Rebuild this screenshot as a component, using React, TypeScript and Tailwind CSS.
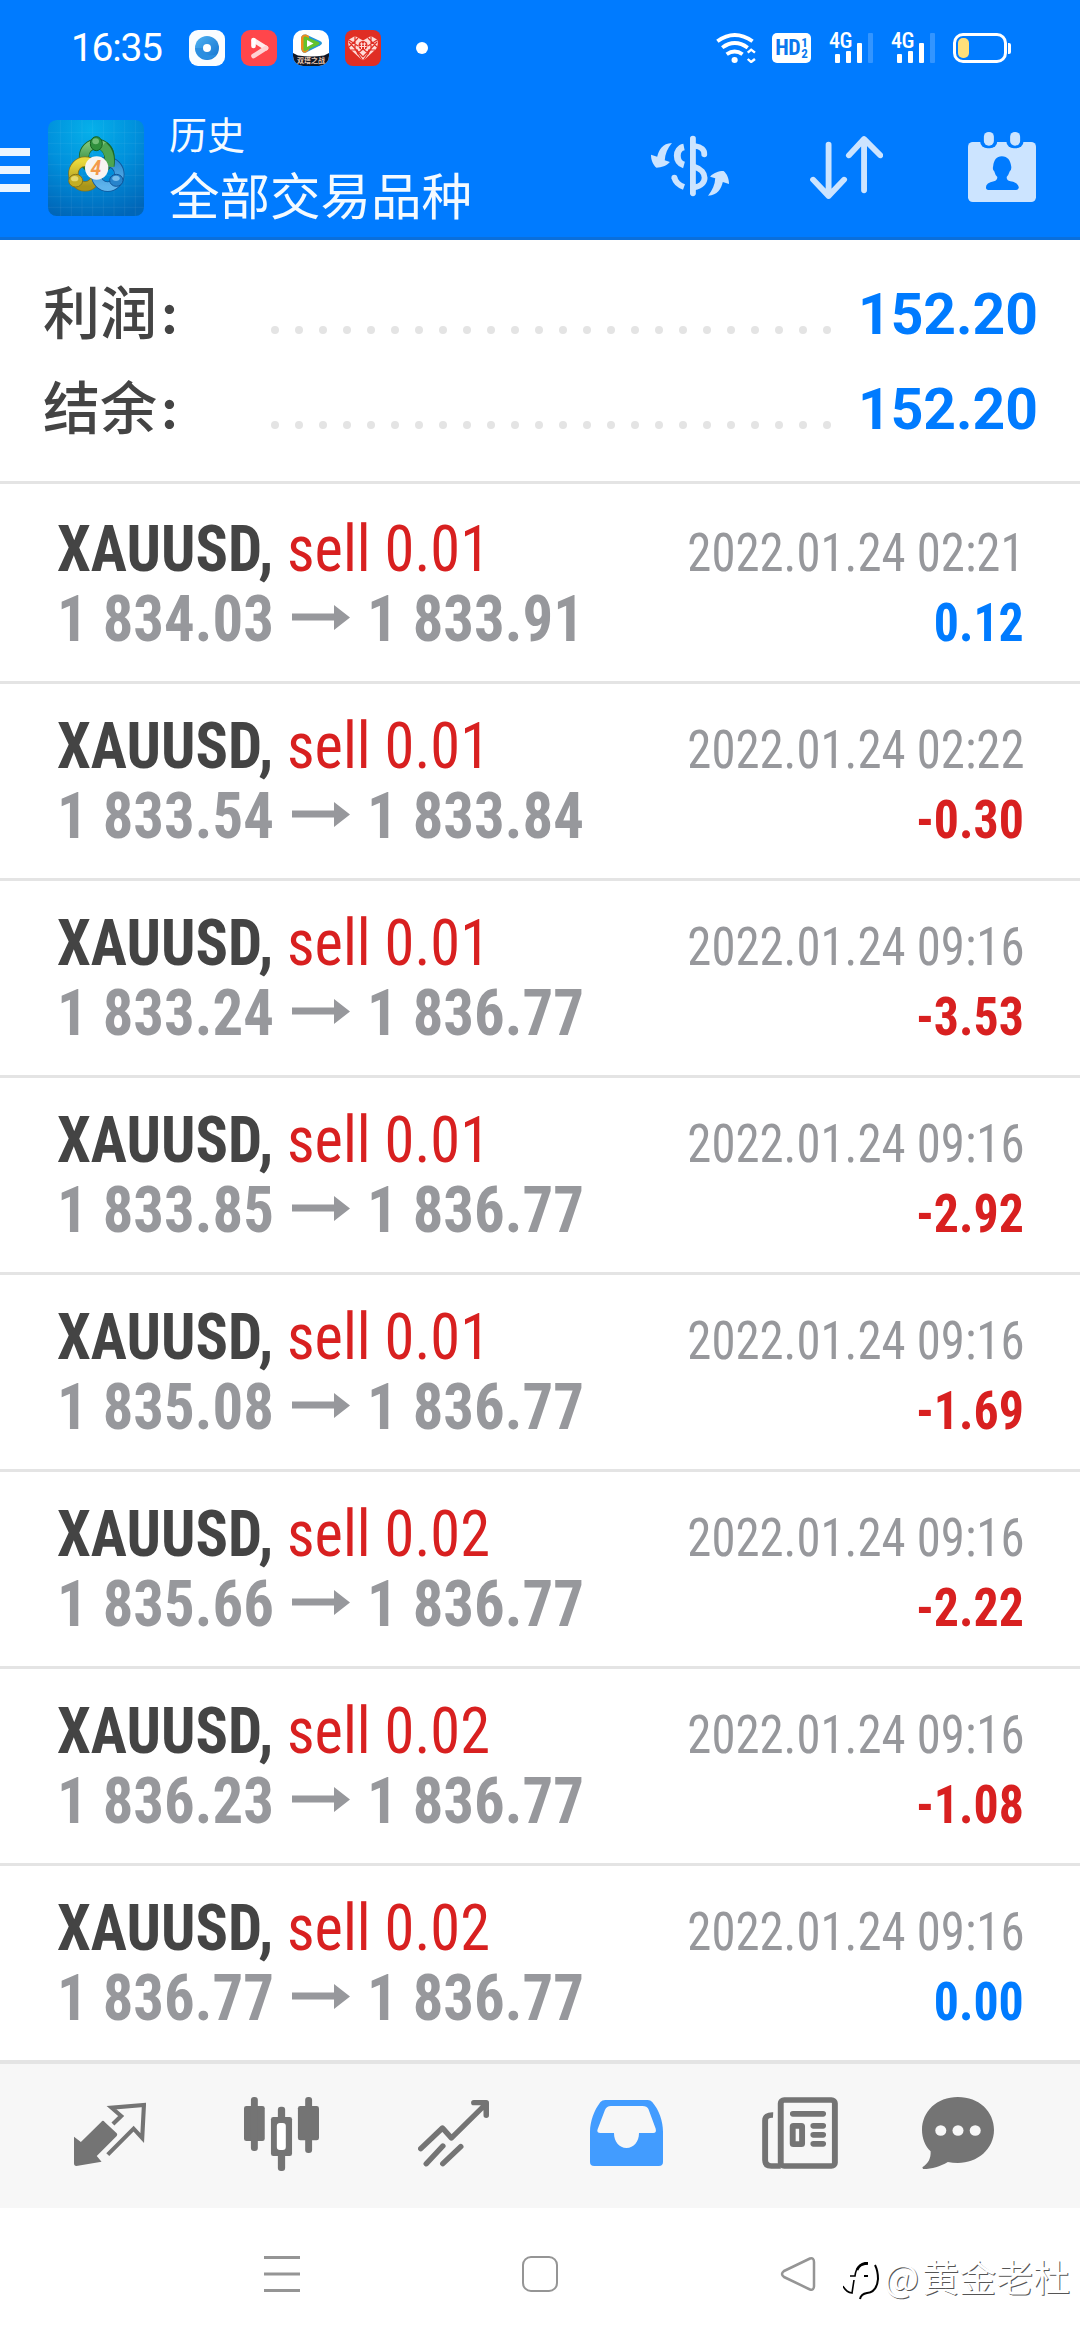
import React from "react";

type Deal = { volume: string; open: string; close: string; time: string; profit: string };

const deals: Deal[] = [
  { volume: "0.01", open: "1 834.03", close: "1 833.91", time: "2022.01.24 02:21", profit: "0.12" },
  { volume: "0.01", open: "1 833.54", close: "1 833.84", time: "2022.01.24 02:22", profit: "-0.30" },
  { volume: "0.01", open: "1 833.24", close: "1 836.77", time: "2022.01.24 09:16", profit: "-3.53" },
  { volume: "0.01", open: "1 833.85", close: "1 836.77", time: "2022.01.24 09:16", profit: "-2.92" },
  { volume: "0.01", open: "1 835.08", close: "1 836.77", time: "2022.01.24 09:16", profit: "-1.69" },
  { volume: "0.02", open: "1 835.66", close: "1 836.77", time: "2022.01.24 09:16", profit: "-2.22" },
  { volume: "0.02", open: "1 836.23", close: "1 836.77", time: "2022.01.24 09:16", profit: "-1.08" },
  { volume: "0.02", open: "1 836.77", close: "1 836.77", time: "2022.01.24 09:16", profit: "0.00" },
];

function Signal() {
  return (
    <div className="relative flex h-[30px] w-11 items-end justify-end gap-[6px]">
      <span className="absolute -top-[3px] left-0 font-['Roboto_Condensed',sans-serif] text-[22px] leading-[22px] font-medium tracking-[-0.5px] text-white">
        4G
      </span>
      <i className="h-[9px] w-[5px] rounded-[1px] bg-white" />
      <i className="h-[12px] w-[5px] rounded-[1px] bg-white" />
      <i className="h-5 w-[5px] rounded-[1px] bg-white" />
      <i className="h-[30px] w-[5px] rounded-[1px] bg-white/20" />
    </div>
  );
}

function StatusBar() {
  return (
    <div className="flex h-24 items-center pr-[69px] pl-[71px]">
      <span className="w-[118px] font-[Roboto,sans-serif] text-[39px] leading-none tracking-[-1.300px] text-white">16:35</span>
      <div className="flex gap-4">
        <svg className="size-9" viewBox="0 0 36 36">
          <defs>
            <linearGradient id="disc" x1="0" y1="0" x2="1" y2="1">
              <stop offset="0" stopColor="#4eb2f2" />
              <stop offset="1" stopColor="#1272cf" />
            </linearGradient>
          </defs>
          <rect width="36" height="36" rx="9" fill="#fafdff" />
          <circle cx="18" cy="18" r="12" fill="url(#disc)" />
          <path d="M6 18A12 12 0 0 0 28 24C22 27 15 25 14 18Z" fill="#2a8ee0" />
          <circle cx="18" cy="18" r="4" fill="#fff" />
        </svg>
        <svg className="size-9" viewBox="0 0 36 36">
          <rect width="36" height="36" rx="9" fill="#ff464b" />
          <path d="M12.500 10V16" stroke="#fff" strokeWidth="4.600" strokeLinecap="round" />
          <path d="M13 10.500L25 18" stroke="#fff" strokeWidth="4.600" strokeLinecap="round" opacity="0.9" />
          <path d="M25 18L12.500 26" stroke="#ffd3d4" strokeWidth="4.600" strokeLinecap="round" />
        </svg>
        <div className="relative size-9 overflow-hidden rounded-[10px] bg-white">
          <svg className="size-9" viewBox="0 0 36 36">
            <path d="M13 4.500Q8 4 8 9V18Q9 24 13 22.500L27 15.500Q31 13 27 11Z" fill="#2496d8" />
            <path d="M13 4.500Q8 4 8 9V18Q9 24 13 22.500L16 20V6Z" fill="#f08c1e" />
            <path d="M12 8V19.500L25 13.500Z" fill="#62c22d" stroke="#62c22d" strokeWidth="3" strokeLinejoin="round" />
            <path d="M14 10V17L20.500 13.500Z" fill="#fff" />
            <path d="M0 23L5 25.500Q18 27.500 31 25.500L36 23V36H0Z" fill="#101827" />
          </svg>
          <span className="absolute top-[26px] left-[4px] font-['Noto_Sans_CJK_SC',sans-serif] text-[7px] leading-[9px] font-bold whitespace-nowrap text-[#e6c7b4]">
            双塔之战
          </span>
        </div>
        <svg className="size-9" viewBox="0 0 36 36">
          <rect width="36" height="36" rx="8" fill="#e02e24" />
          <path d="M18 31L5 19Q2 14 4 9.500L10 6L18 10.500L26 6L32 9.500Q34 14 31 19Z" fill="#ffdcd8" />
          <path
            d="M4 12L18 27M32 12L18 27M10 6V19L18 31M26 6V19L18 31M4 17L13 8M32 17L23 8M6 20H13M23 20H30M12 24L18 19L24 24M4 10L13 16M32 10L23 16"
            stroke="#e02e24"
            strokeWidth="1.200"
            fill="none"
          />
          <circle cx="18" cy="15.500" r="4.600" fill="#e02e24" />
          <path d="M15 14H21M14.500 16.500H21.500M16.500 12.500V19M19.500 12.500V19" stroke="#ffdcd8" strokeWidth="1" />
        </svg>
      </div>
      <i className="ml-[35px] size-3 rounded-full bg-white" />
      <div className="ml-auto flex items-center">
        <svg className="h-[30px] w-10" viewBox="512 99 116 90" preserveAspectRatio="none">
          <g fill="none" stroke="#fff" strokeWidth="11">
            <path d="M516 124Q566 86 618 124" />
            <path d="M530 143Q566 115 604 143" />
            <path d="M543 163Q566 146 589 163" />
            <path d="M604 158L614 149L625 158M604 177L614 186L625 177" strokeWidth="7" />
          </g>
          <circle cx="566" cy="180" r="9" fill="#fff" />
        </svg>
        <div className="ml-4 flex h-[30px] w-[39px] items-center justify-center gap-px rounded-[5px] bg-white font-['Roboto_Condensed',sans-serif] text-[#0a78ee]">
          <span className="text-[22px] leading-[30px] font-bold tracking-[-0.5px]">HD</span>
          <span className="flex flex-col text-[13px] leading-[11px] font-bold">
            <span>1</span>
            <span>2</span>
          </span>
        </div>
        <div className="ml-[18px]">
          <Signal />
        </div>
        <div className="ml-[18px]">
          <Signal />
        </div>
        <div className="ml-[18px] h-[30px] w-[54px] rounded-[10px] border-[3px] border-white p-[2px]">
          <div className="h-5 w-[11px] rounded-[5px] bg-[#ffdf7a]" />
        </div>
        <i className="ml-px h-[11px] w-[3px] rounded-r-[2px] bg-white" />
      </div>
    </div>
  );
}

function AppLogo() {
  return (
    <svg className="mt-6 ml-[18px] size-24 shrink-0" viewBox="12 12 288 288">
      <defs>
        <radialGradient id="tile" cx="0.45" cy="0.1" r="0.95">
          <stop offset="0" stopColor="#06b0ea" />
          <stop offset="0.5" stopColor="#0090dc" />
          <stop offset="1" stopColor="#0066b8" />
        </radialGradient>
        <linearGradient id="green" x1="0" y1="0" x2="0" y2="1">
          <stop offset="0" stopColor="#7cc47a" />
          <stop offset="1" stopColor="#1f7a2c" />
        </linearGradient>
        <linearGradient id="yellow" x1="0" y1="0" x2="0" y2="1">
          <stop offset="0" stopColor="#e9d83c" />
          <stop offset="1" stopColor="#a8941a" />
        </linearGradient>
        <linearGradient id="blue" x1="0" y1="0" x2="0" y2="1">
          <stop offset="0" stopColor="#2f8fd4" />
          <stop offset="1" stopColor="#5fb4ec" />
        </linearGradient>
      </defs>
      <rect x="12" y="12" width="288" height="288" rx="26" fill="url(#tile)" />
      <path
        d="M50 12V300M82 12V300M114 12V300M146 12V300M178 12V300M210 12V300M242 12V300M274 12V300M12 50H300M12 82H300M12 114H300M12 146H300M12 178H300M12 210H300M12 242H300M12 274H300"
        stroke="#fff"
        strokeOpacity="0.09"
        strokeWidth="2"
      />
      <g fill="none">
        <ellipse cx="158" cy="122" rx="38" ry="38" stroke="#1d6a28" strokeWidth="31" />
        <ellipse cx="158" cy="122" rx="38" ry="38" stroke="url(#green)" strokeWidth="26" />
        <ellipse cx="123" cy="174" rx="35" ry="37" stroke="#857318" strokeWidth="31" />
        <ellipse cx="123" cy="174" rx="35" ry="37" stroke="url(#yellow)" strokeWidth="26" />
        <ellipse cx="191" cy="175" rx="35" ry="37" stroke="#11569a" strokeWidth="31" />
        <ellipse cx="191" cy="175" rx="35" ry="37" stroke="url(#blue)" strokeWidth="26" />
        <path d="M180 91Q202 108 196 150" stroke="#1d6a28" strokeWidth="31" />
        <path d="M176 89Q202 108 196 152" stroke="#4da552" strokeWidth="26" />
      </g>
      <ellipse cx="157" cy="83" rx="18" ry="21" fill="#2f8f3c" stroke="#15601f" strokeWidth="3" />
      <ellipse cx="155" cy="76" rx="10" ry="9" fill="#8fd08e" opacity="0.7" />
      <ellipse cx="95" cy="194" rx="21" ry="19" fill="#c4ae24" stroke="#857318" strokeWidth="3" />
      <ellipse cx="92" cy="188" rx="11" ry="8" fill="#f3e98a" opacity="0.7" />
      <ellipse cx="217" cy="193" rx="20" ry="18" fill="#2784cc" stroke="#11569a" strokeWidth="3" />
      <ellipse cx="216" cy="187" rx="11" ry="8" fill="#9ad4f8" opacity="0.7" />
      <circle cx="158" cy="156" r="35" fill="#f7f4f2" />
      <text x="156" y="176" textAnchor="middle" fontFamily="Roboto, sans-serif" fontWeight="700" fontStyle="italic" fontSize="58" fill="#f39a4a">
        4
      </text>
    </svg>
  );
}

function Header() {
  return (
    <header className="h-60 shrink-0 border-b-[3px] border-[#0a6fdc] bg-[#007bff]">
      <StatusBar />
      <div className="flex items-start pr-11">
        <div className="mt-[52px] flex w-[30px] flex-col gap-[10px]">
          <i className="h-2 bg-[#eaf5ff]" />
          <i className="h-2 bg-[#eaf5ff]" />
          <i className="h-2 bg-[#eaf5ff]" />
        </div>
        <AppLogo />
        <div className="mt-3 ml-[25px] font-['Noto_Sans_CJK_SC',sans-serif] text-[#f4faff]">
          <div className="text-[38px] leading-[50px]">历史</div>
          <div className="text-[50.500px] leading-[70px]">全部交易品种</div>
        </div>
        <svg className="mt-[35px] ml-auto h-[72px] w-[78px]" viewBox="322 393 227 216" preserveAspectRatio="none">
          <g fill="none" stroke="#cce4ff" strokeWidth="17">
            <path d="M444 416V580" strokeLinecap="round" />
            <path d="M418 441C392 446 392 488 418 495" strokeWidth="20" />
            <path d="M450 438C468 440 478 450 477 463" strokeLinecap="round" />
            <path d="M448 500C488 512 488 556 448 562" />
            <path d="M390 533C393 546 404 556 418 561" />
            <path d="M390 533V533.100" strokeLinecap="round" />
          </g>
          <path
            id="swap"
            d="M383 429C355 430 345 450 340 470L322 464C322 480 328 495 338 503C352 503 368 497 377 486L362 481C363 462 370 445 383 429Z"
            fill="#cce4ff"
          />
          <use href="#swap" transform="rotate(180 435.500 508)" />
        </svg>
        <svg className="mt-[35px] ml-[81px] h-[72px] w-[73px]" viewBox="783 393 212 216" preserveAspectRatio="none">
          <path
            d="M837 434V588M792 539L837 588L882 539M940 571V417M896 466L940 417L987 466"
            fill="none"
            stroke="#cce4ff"
            strokeWidth="17"
            strokeLinecap="round"
            strokeLinejoin="round"
          />
        </svg>
        <svg className="mt-[35px] ml-[85px] h-[72px] w-[68px]" viewBox="1243 393 197 216" preserveAspectRatio="none">
          <rect x="1243" y="426" width="197" height="180" rx="14" fill="#cce4ff" />
          <rect x="1278" y="380" width="50" height="65" rx="22" fill="#007bff" />
          <rect x="1354" y="380" width="50" height="65" rx="22" fill="#007bff" />
          <rect x="1289" y="396" width="29" height="41" rx="14" fill="#cce4ff" />
          <rect x="1365" y="396" width="29" height="41" rx="14" fill="#cce4ff" />
          <path
            d="M1341 469C1358 469 1366 482 1368 498Q1370 510 1364 514Q1360 526 1355 531Q1355 542 1366 544Q1388 548 1390 561V564Q1388 570 1382 570H1302Q1295 570 1295 562Q1295 549 1318 544Q1328 541 1328 531Q1322 526 1319 514Q1313 510 1316 498C1318 480 1326 469 1341 469Z"
            fill="#007bff"
          />
        </svg>
      </div>
    </header>
  );
}

function SummaryRow({ label, value }: { label: string; value: string }) {
  return (
    <div className="flex h-[95px] items-baseline pr-[42px] pl-[43px] leading-[95px]">
      <span className="w-[228px] font-['Noto_Sans_CJK_SC',sans-serif] text-[57px] font-medium text-[#444444]">
        {label}
        <span className="ml-[5px] font-[Lato,sans-serif] font-black">:</span>
      </span>
      <span className="flex gap-4">
        {Array.from({ length: 24 }, (_, i) => (
          <i key={i} className="size-2 rounded-full bg-[#e4e4e4]" />
        ))}
      </span>
      <span className="ml-auto font-[Roboto,sans-serif] text-[57px] font-bold text-[#007bff]">{value}</span>
    </div>
  );
}

function DealRow({ deal }: { deal: Deal }) {
  const loss = deal.profit.startsWith("-");
  return (
    <li className="h-[197px] border-b-[3px] border-[#e4e4e4] pt-[27px] pr-[56px] pl-[57px] font-['Roboto_Condensed',sans-serif] text-[65px] leading-[70px] whitespace-nowrap">
      <div className="flex h-[70px] items-baseline">
        <span className="w-[230px] shrink-0 origin-left scale-x-[0.930] font-bold text-[#444444]">XAUUSD,</span>
        <span className="origin-left scale-x-[0.930] text-[#d82020]">sell {deal.volume}</span>
        <span className="ml-auto origin-right scale-x-[0.920] text-[53px] text-[#97989c]">{deal.time}</span>
      </div>
      <div className="flex h-[70px] items-baseline text-[#97989c]">
        <span className="w-[235px] shrink-0 origin-left scale-x-[0.935] font-bold [word-spacing:1px]">{deal.open}</span>
        <svg className="mt-[21px] h-[25px] w-[58px] shrink-0 self-start" viewBox="0 0 58 25">
          <path d="M0 8.500H42V0L58 12.500L42 25V15.500H0Z" fill="#97989c" />
        </svg>
        <span className="ml-[17px] origin-left scale-x-[0.935] font-bold [word-spacing:1px]">{deal.close}</span>
        <span
          className={
            loss
              ? "ml-auto origin-right scale-x-[0.940] text-[53px] font-bold text-[#d82020]"
              : "ml-auto origin-right scale-x-[0.940] text-[53px] font-bold text-[#007bff]"
          }
        >
          {deal.profit}
        </span>
      </div>
    </li>
  );
}

function TabBar() {
  return (
    <nav className="flex h-[148px] shrink-0 items-start border-t-4 border-[#e4e4e4] bg-[#f7f7f7] pt-[33px]">
      <svg className="ml-[74px] h-[74px] w-[72px]" viewBox="215 141 209 222" preserveAspectRatio="none">
        <path d="M215 260L235 276L294 216Q299 209 304 216L339 250Q342 254 339 258L281 318L295 335L222 348Q215 348 215 340Z" fill="#747474" />
        <path d="M328 222L352 198L324 173L418 165L413 264L388 236L313 314" fill="none" stroke="#747474" strokeWidth="12" />
      </svg>
      <svg className="ml-[98px] h-[74px] w-[75px]" viewBox="709 141 217 222" preserveAspectRatio="none">
        <g fill="#747474">
          <rect x="709" y="168" width="60" height="105" rx="7" />
          <rect x="729" y="141" width="20" height="162" rx="9" />
          <rect x="865" y="168" width="61" height="103" rx="7" />
          <rect x="886" y="141" width="20" height="168" rx="9" />
          <rect x="787" y="201" width="61" height="117" rx="7" />
          <rect x="807" y="170" width="21" height="193" rx="9" />
        </g>
        <rect x="804" y="219" width="26" height="81" rx="9" fill="#fff" />
      </svg>
      <svg className="ml-[99px] h-[74px] w-[71px]" viewBox="1214 141 206 222" preserveAspectRatio="none">
        <path
          d="M1222 296L1285 234L1311 264L1408 165M1376 158H1412V196M1238 341L1286 288M1286 341L1338 290"
          fill="none"
          stroke="#747474"
          strokeWidth="16"
          strokeLinecap="round"
          strokeLinejoin="round"
        />
      </svg>
      <svg className="ml-[101px] h-[74px] w-[73px]" viewBox="146 141 210 222" preserveAspectRatio="none">
        <path
          fillRule="evenodd"
          fill="#429cff"
          d="M190 150H312Q320 150 325 156C345 180 356 215 356 245V336Q356 348 344 348H158Q146 348 146 336V245C146 215 158 180 176 156Q181 150 190 150ZM206 168H297Q310 168 314 177L335 236Q338 249 328 249H287C287 275 272 294 251 294C230 294 215 275 215 249H176Q164 249 168 238L189 180Q194 168 206 168Z"
        />
      </svg>
      <svg className="ml-[99px] h-[74px] w-[76px]" viewBox="645 141 219 222" preserveAspectRatio="none">
        <g fill="none" stroke="#747474" strokeWidth="17">
          <rect x="699" y="150" width="156" height="198" rx="10" />
          <path d="M677 195Q654 194 654 212V330Q654 348 672 348H699" />
          <rect x="733.500" y="227.500" width="27" height="55" rx="2" />
          <path d="M734 191.500H821M793 227.500H821M793 254.500H821M793 281.500H821" strokeLinecap="round" />
        </g>
      </svg>
      <svg className="ml-[84px] h-[74px] w-[72px]" viewBox="1109 141 209 222" preserveAspectRatio="none">
        <path
          d="M1213 141C1275 141 1318 185 1318 240C1318 297 1270 339 1213 339Q1198 339 1184 336C1160 350 1140 357 1112 357L1110 352C1128 340 1135 325 1134 304C1118 288 1109 265 1109 240C1109 185 1152 141 1213 141Z"
          fill="#747474"
        />
        <g fill="#f7f7f7">
          <circle cx="1163.500" cy="241.500" r="16" />
          <circle cx="1213.500" cy="241.500" r="16" />
          <circle cx="1263.500" cy="241.500" r="16" />
        </g>
      </svg>
    </nav>
  );
}

function SystemNav() {
  return (
    <div className="relative flex h-[132px] shrink-0 items-center bg-white">
      <svg className="ml-[264px] h-9 w-9" viewBox="0 0 36 36">
        <path d="M0 1.500H36M0 18H36M0 34.500H36" stroke="#959595" strokeWidth="3" />
      </svg>
      <i className="ml-[222px] size-9 rounded-[9px] border-[2.500px] border-[#959595]" />
      <svg className="ml-[222px] h-9 w-9" viewBox="0 0 36 36">
        <path
          d="M30 2.500L4 15Q0 18 4 21L30 33.500Q34 34.500 34 30V6Q34 1.500 30 2.500Z"
          fill="none"
          stroke="#959595"
          strokeWidth="2.500"
          strokeLinejoin="round"
        />
      </svg>
      <div className="absolute top-[42px] right-[10px] flex items-center">
        <svg className="mt-3 h-10 w-9" viewBox="0 0 36 40" fill="none">
          <path d="M0 24Q3 30 9 31L11 18M7 14H12Q13 2 25 2" stroke="#000" strokeWidth="1.600" />
          <path d="M14 8Q17 1 25 1" stroke="#000" strokeWidth="2.600" />
          <path d="M21 14H25" stroke="#000" strokeWidth="2" />
          <path d="M32 3Q35 9 35 17Q34 30 24 31Q18 32 17 37" stroke="#000" strokeWidth="2" />
        </svg>
        <span className="ml-[5px] font-['Noto_Sans_CJK_SC',sans-serif] text-[37px] leading-[44px] text-white [text-shadow:1px_1px_0_#555]">
          <span className="mr-[3px]">@</span>黄金老杜
        </span>
      </div>
    </div>
  );
}

export default function App() {
  return (
    <div className="flex h-[2340px] w-[1080px] flex-col overflow-hidden bg-white">
      <Header />
      <section className="h-[244px] shrink-0 border-b-[3px] border-[#e4e4e4] pt-[22px]">
        <SummaryRow label="利润" value="152.20" />
        <SummaryRow label="结余" value="152.20" />
      </section>
      <ul className="h-[1576px] shrink-0 overflow-hidden pt-[3px]">
        {deals.map((deal, i) => (
          <DealRow key={i} deal={deal} />
        ))}
      </ul>
      <TabBar />
      <SystemNav />
    </div>
  );
}
